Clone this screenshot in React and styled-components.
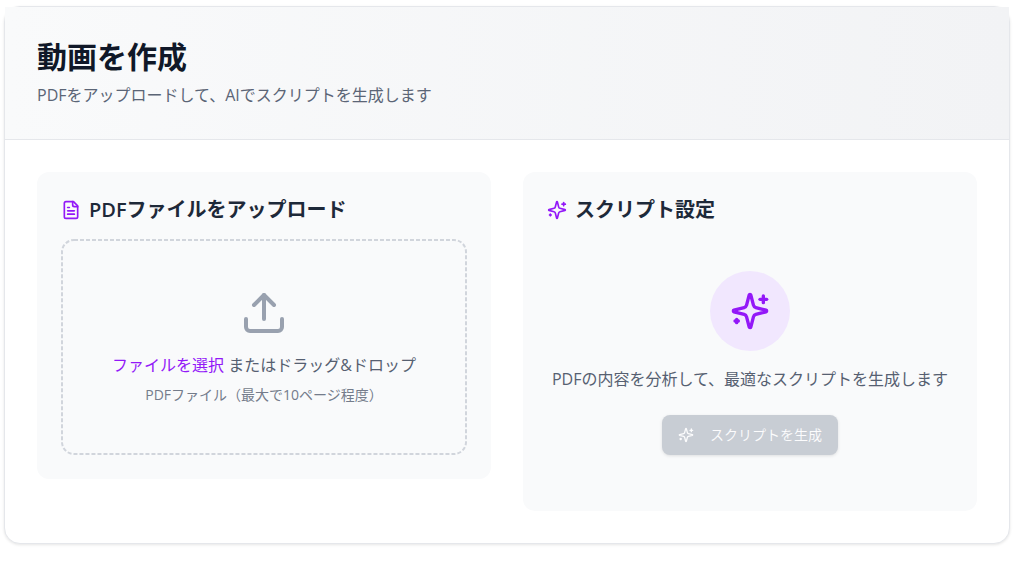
import React, { useState } from 'react';
import styled, { createGlobalStyle } from 'styled-components';

const SparklesIcon = ({ size = 20 }) => (
    <Icon viewBox="0 0 24 24" width={size} height={size} aria-hidden="true">
        <path d="M9.937 15.5A2 2 0 0 0 8.5 14.063l-6.135-1.582a.5.5 0 0 1 0-.962L8.5 9.936A2 2 0 0 0 9.937 8.5l1.582-6.135a.5.5 0 0 1 .963 0L14.063 8.5A2 2 0 0 0 15.5 9.937l6.135 1.581a.5.5 0 0 1 0 .964L15.5 14.063a2 2 0 0 0-1.437 1.437l-1.582 6.135a.5.5 0 0 1-.963 0z" />
        <path d="M20 3v4" />
        <path d="M22 5h-4" />
        <path d="M4 17v2" />
        <path d="M5 18H3" />
    </Icon>
);

const FileTextIcon = ({ size = 20 }) => (
    <Icon viewBox="0 0 24 24" width={size} height={size} aria-hidden="true">
        <path d="M15 2H6a2 2 0 0 0-2 2v16a2 2 0 0 0 2 2h12a2 2 0 0 0 2-2V7Z" />
        <path d="M14 2v4a2 2 0 0 0 2 2h4" />
        <path d="M10 9H8" />
        <path d="M16 13H8" />
        <path d="M16 17H8" />
    </Icon>
);

const UploadIcon = ({ size = 48 }) => (
    <Icon viewBox="0 0 24 24" width={size} height={size} aria-hidden="true">
        <path d="M21 15v4a2 2 0 0 1-2 2H5a2 2 0 0 1-2-2v-4" />
        <path d="M17 8l-5-5-5 5" />
        <path d="M12 3v12" />
    </Icon>
);

const App = () => {
    const [file, setFile] = useState(null);

    const handleDrop = (e) => {
        e.preventDefault();
        setFile(e.dataTransfer.files[0] || null);
    };

    return (
        <Page>
            <GlobalStyle />
            <Card>
                <Header>
                    <Title>動画を作成</Title>
                    <Subtitle>PDFをアップロードして、AIでスクリプトを生成します</Subtitle>
                </Header>
                <Content>
                    <Panel>
                        <PanelTitle>
                            <FileTextIcon />
                            <span>PDFファイルをアップロード</span>
                        </PanelTitle>
                        <DropZone onDragOver={(e) => e.preventDefault()} onDrop={handleDrop}>
                            <DashedFrame aria-hidden="true">
                                <rect x="1" y="1" rx="12" />
                            </DashedFrame>
                            <UploadIcon />
                            <DropText>
                                <SelectLabel htmlFor="pdf-file">ファイルを選択</SelectLabel>
                                {' またはドラッグ&ドロップ'}
                            </DropText>
                            <DropHint>{file ? file.name : 'PDFファイル（最大で10ページ程度）'}</DropHint>
                            <input
                                id="pdf-file"
                                type="file"
                                accept="application/pdf"
                                hidden
                                onChange={(e) => setFile(e.target.files[0] || null)}
                            />
                        </DropZone>
                    </Panel>
                    <Panel>
                        <PanelTitle>
                            <SparklesIcon />
                            <span>スクリプト設定</span>
                        </PanelTitle>
                        <EmptyState>
                            <IconCircle>
                                <SparklesIcon size={40} />
                            </IconCircle>
                            <EmptyText>PDFの内容を分析して、最適なスクリプトを生成します</EmptyText>
                            <GenerateButton type="button" disabled={!file}>
                                <SparklesIcon size={16} />
                                スクリプトを生成
                            </GenerateButton>
                        </EmptyState>
                    </Panel>
                </Content>
            </Card>
        </Page>
    );
};

const GlobalStyle = createGlobalStyle`
    *, *::before, *::after {
        box-sizing: border-box;
    }

    body {
        margin: 0;
        background-color: #fff;
        font-family: 'Open Sans', 'Noto Sans CJK JP', sans-serif;
        font-size: 16px;
        line-height: 24px;
    }

    h1, h2, p {
        margin: 0;
    }
`;

const Icon = styled.svg`
    flex-shrink: 0;
    fill: none;
    stroke: currentColor;
    stroke-width: 2;
    stroke-linecap: round;
    stroke-linejoin: round;
`;

const Page = styled.main`
    padding: 6px 14px 18px 4px;
`;

const Card = styled.section`
    border: 1px solid #e5e7eb;
    border-radius: 16px;
    background-color: #fff;
    box-shadow: 0 1px 3px rgba(0, 0, 0, 0.1);
`;

const Header = styled.header`
    padding: 32px;
    border-bottom: 1px solid #e5e7eb;
    background: linear-gradient(to right, #f9fafb, #f2f3f5);
`;

const Title = styled.h1`
    margin-bottom: 8px;
    color: #101828;
    font-size: 30px;
    font-weight: 700;
    line-height: 36px;
`;

const Subtitle = styled.p`
    color: #5b6576;
`;

const Content = styled.div`
    display: grid;
    grid-template-columns: repeat(2, minmax(0, 1fr));
    align-items: start;
    gap: 32px;
    padding: 32px;
`;

const Panel = styled.section`
    padding: 24px;
    border-radius: 12px;
    background-color: #f9fafb;
`;

const PanelTitle = styled.h2`
    display: flex;
    align-items: center;
    gap: 8px;
    margin-bottom: 15px;
    color: #1e2939;
    font-size: 20px;
    font-weight: 600;
    line-height: 28px;

    svg {
        color: #9318f8;
    }
`;

const DropZone = styled.div`
    position: relative;
    display: flex;
    flex-direction: column;
    align-items: center;
    padding: 50px 32px;
    color: #99a1af;
    text-align: center;
`;

const DashedFrame = styled.svg`
    position: absolute;
    inset: 0;
    width: 100%;
    height: 100%;
    pointer-events: none;

    rect {
        width: calc(100% - 2px);
        height: calc(100% - 2px);
        fill: none;
        stroke: #d1d5dc;
        stroke-width: 2;
        stroke-dasharray: 4 2;
    }
`;

const DropText = styled.p`
    margin-top: 16px;
    color: #566071;
`;

const SelectLabel = styled.label`
    color: #9318f8;
    cursor: pointer;
`;

const DropHint = styled.p`
    margin-top: 8px;
    color: #747c8b;
    font-size: 14px;
    line-height: 20px;
`;

const EmptyState = styled.div`
    display: flex;
    flex-direction: column;
    align-items: center;
    padding: 32px 0;
    text-align: center;
`;

const IconCircle = styled.div`
    display: flex;
    align-items: center;
    justify-content: center;
    width: 80px;
    height: 80px;
    margin-bottom: 16px;
    border-radius: 50%;
    background-color: #f1e7fe;
    color: #9318f8;
`;

const EmptyText = styled.p`
    margin-bottom: 24px;
    color: #566071;
    white-space: nowrap;
`;

const GenerateButton = styled.button`
    display: inline-flex;
    align-items: center;
    gap: 16px;
    height: 40px;
    padding: 0 16px;
    border: none;
    border-radius: 8px;
    background-color: #9318f8;
    color: #fff;
    font-family: inherit;
    font-size: 14px;
    font-weight: 350;
    line-height: 20px;
    box-shadow: 0 1px 3px rgba(0, 0, 0, 0.2);
    cursor: pointer;

    &:disabled {
        background-color: #99a1af;
        opacity: 0.5;
        cursor: not-allowed;
    }
`;

export default App;
